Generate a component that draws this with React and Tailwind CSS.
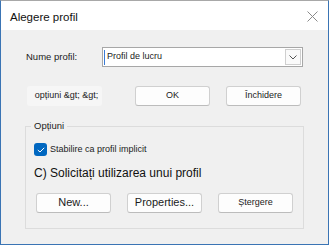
import React from "react";

// Small windows-style button
const Btn = ({ children, className = "" }) => (
  <button
    className={`w-[75px] h-[20px] flex items-center justify-center rounded-[3px] border border-[#d0d0d0] border-b-[#bcbcbc] bg-[#fdfdfd] text-[#1b1b1b] ${className}`}
  >
    {children}
  </button>
);

const App = () => {
  return (
    <div
      className="w-[329px] h-[245px] flex flex-col border-t border-t-[#a8a8a8] border-x border-x-[#3a74b4] border-b border-b-[#3a74b4] bg-white"
      style={{ fontFamily: '"Liberation Sans", Arial, sans-serif' }}
    >
      {/* Title bar */}
      <div className="h-[29px] shrink-0 flex items-center justify-between pl-[9px] pr-[10px]">
        <span className="text-[11.5px] text-[#111] pt-[4px]">Alegere profil</span>
        <svg width="11" height="11" viewBox="0 0 11 11" className="mt-[2px]">
          <path d="M0.5 0.5 L10.5 10.5 M10.5 0.5 L0.5 10.5" stroke="#8a8a8a" strokeWidth="1" />
        </svg>
      </div>

      {/* Body */}
      <div className="flex-1 bg-[#f0f0f0] pl-[24px] pt-[17px] text-[9.5px] text-[#1b1b1b]">
        {/* Profile name row */}
        <div className="flex items-center">
          <span className="w-[77px] pl-[1px] pt-[1px]">Nume profil:</span>
          <div className="w-[201px] h-[20px] flex items-center border border-[#a7a7a7] bg-white">
            <div className="ml-[1px] w-[1px] h-[15px] bg-[#3a7bd5]" />
            <span className="flex-1 pl-[2px] text-[9px]">Profil de lucru</span>
            <div className="w-[16px] h-[16px] mr-[1px] flex items-center justify-center border border-[#cfcfcf] bg-[#fafafa]">
              <svg width="8" height="5" viewBox="0 0 8 5">
                <path d="M0.5 0.5 L4 4 L7.5 0.5" fill="none" stroke="#555" strokeWidth="1" />
              </svg>
            </div>
          </div>
        </div>

        {/* Button row */}
        <div className="flex items-center mt-[19px] ml-[2px] text-[9px]">
          <button className="w-[75px] h-[20px] flex items-center justify-center rounded-[3px] bg-[#f6f6f6] pl-[4px]">
            opțiuni &amp;gt; &amp;gt;
          </button>
          <Btn className="ml-[33px]">OK</Btn>
          <Btn className="ml-[16px]">Închidere</Btn>
        </div>

        {/* Options group */}
        <div className="mt-[20px] w-[279px] h-[103px] border border-[#dcdcdc] flex flex-col">
          <span className="-mt-[7px] ml-[5px] px-[3px] w-fit leading-[12px] bg-[#f0f0f0]">Opțiuni</span>

          <div className="flex items-center mt-[11px] ml-[8px]">
            <div className="w-[13px] h-[13px] rounded-[3px] bg-[#0067c0] flex items-center justify-center">
              <svg width="8" height="6" viewBox="0 0 8 6">
                <path d="M0.8 3 L3 5 L7.2 0.8" fill="none" stroke="white" strokeWidth="1" />
              </svg>
            </div>
            <span className="ml-[3px] text-[9px]">Stabilire ca profil implicit</span>
          </div>

          <div className="mt-[9px] ml-[8px] text-[12px] leading-[14px] text-[#111]">
            C) Solicitați utilizarea unui profil
          </div>

          <div className="flex items-center mt-[13px] ml-[10px]">
            <Btn className="text-[11px]">New...</Btn>
            <Btn className="ml-[16px] text-[11px]">Properties...</Btn>
            <Btn className="ml-[16px] text-[9px]">Ștergere</Btn>
          </div>
        </div>
      </div>
    </div>
  );
};

export default App;
